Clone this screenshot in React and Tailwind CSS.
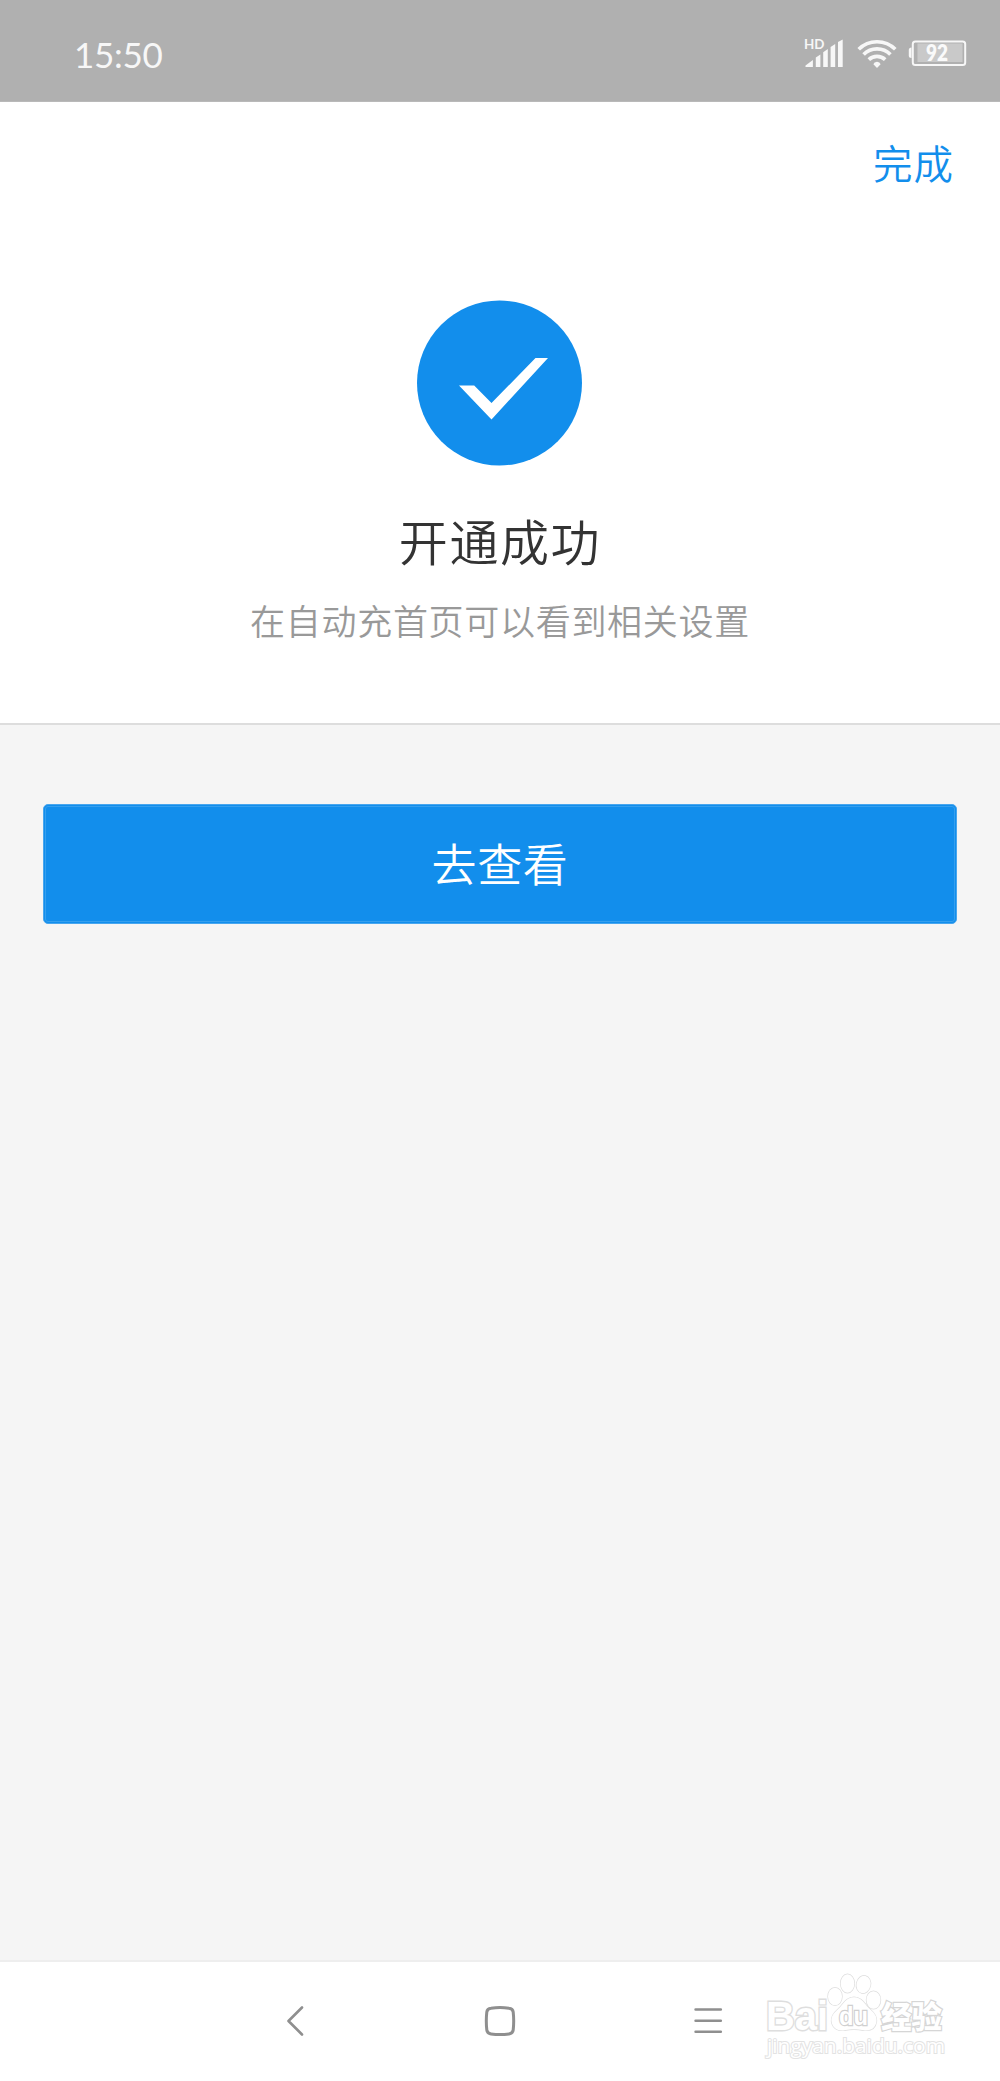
import React from 'react';

const SignalIcon = () => (
  <svg className="mt-[-6px]" width="40" height="36" viewBox="0 -6 40 36" fill="#f7f7f7">
    <text x="0" y="10" fontSize="14" fontWeight="700" fontFamily="Lato, sans-serif" textLength="20.5" lengthAdjust="spacingAndGlyphs">HD</text>
    <path d="M1.500 28V26.500L8.900 21v7z" />
    <path d="M11.800 28V18.600L16.400 15.400V28z" />
    <path d="M19.200 28V13.200L23.800 10V28z" />
    <path d="M26.600 28V8L31.200 5V28z" />
    <path d="M34 28V3L38.700 .6V28z" />
  </svg>
);

const WifiIcon = () => (
  <svg width="40" height="30" viewBox="0 0 40 30" fill="none" stroke="#f7f7f7" strokeWidth="3.700">
    <path d="M1.700 10.300a26 26 0 0 1 36.600 0" />
    <path d="M6.600 15.500a19 19 0 0 1 26.800 0" />
    <path d="M11.800 20.600a12 12 0 0 1 16.400 0" />
    <path d="M16.400 25.300a3.700 3.300 0 0 1 7.200 0L20 29z" fill="#f7f7f7" stroke="none" />
  </svg>
);

const BatteryIcon = () => (
  <svg width="60" height="28" viewBox="0 0 60 28">
    <path d="M3.500 8.500Q.8 8.500 .8 11v5.500q0 2.500 2.700 2.500z" fill="#f7f7f7" />
    <rect x="9.500" y="4.500" width="45" height="18.500" fill="#c9c9c9" />
    <rect x="4.800" y="2.500" width="52.400" height="23.500" rx="2.500" fill="none" stroke="#f7f7f7" strokeWidth="2" />
    <text x="18" y="22" fontSize="22.500" fontWeight="800" fill="#fafafa" fontFamily="Lato, sans-serif" textLength="22" lengthAdjust="spacingAndGlyphs">92</text>
  </svg>
);

const StatusBar = () => (
  <header className="flex h-[102px] items-start border-b border-[#b9b9b9] bg-[#b0b0b0] pl-[74px] pr-[32px] pt-[39px]">
    <span className="mt-[-2px] flex-1 font-['Lato',sans-serif] text-[35px] font-normal leading-[35px] tracking-[-0.3px] text-[#f7f7f7]">15:50</span>
    <div className="flex items-start">
      <SignalIcon />
      <div className="ml-[13px] mr-[11px]">
        <WifiIcon />
      </div>
      <BatteryIcon />
    </div>
  </header>
);

// Outlined logo stamped over the bottom corner
const Watermark = () => (
  <svg
    className="absolute right-[50px] top-[10px]"
    width="190"
    height="100"
    viewBox="0 0 190 100"
    fill="#fff"
    stroke="#dedede"
    strokeWidth="1.400"
    paintOrder="stroke"
  >
    <text x="6" y="57.500" fontSize="41" fontWeight="700" strokeWidth="2.800" fontFamily="'Liberation Sans', sans-serif" textLength="62" lengthAdjust="spacingAndGlyphs">Bai</text>
    <ellipse cx="75" cy="24.500" rx="7" ry="8.800" />
    <ellipse cx="87.500" cy="11.500" rx="6.800" ry="9.200" />
    <ellipse cx="103.500" cy="12.500" rx="7" ry="8.800" transform="rotate(12 103.500 12.500)" />
    <ellipse cx="113.500" cy="28" rx="7" ry="8.800" />
    <path d="M94 25.200c-8 0-11 7.500-16 12-4.500 4-7 7.500-6.500 12 1 7.500 7 10 13 9 7-1.200 12-1.200 19 0 7 1 12-2 13-9 .5-5-2-8-6.500-12-5-4.500-8-12-16-12z" />
    <text x="79" y="53" fontSize="25" fontWeight="700" strokeWidth="2.400" stroke="#d0d0d0" fontFamily="'Liberation Sans', sans-serif" textLength="29" lengthAdjust="spacingAndGlyphs">du</text>
    <text x="121" y="55.500" fontSize="31" fontWeight="900" strokeWidth="2.400" stroke="#d6d6d6" fontFamily="'Noto Sans CJK SC', sans-serif" textLength="61" lengthAdjust="spacingAndGlyphs">经验</text>
    <text x="7" y="81" fontSize="20" fontWeight="400" strokeWidth="2" stroke="#e3e3e3" fontFamily="'Open Sans', sans-serif" textLength="178" lengthAdjust="spacingAndGlyphs">jingyan.baidu.com</text>
  </svg>
);

const NavBar = () => (
  <nav className="relative h-[121px] border-t-2 border-[#eeeeee] bg-white pt-[43px]">
    <div className="flex pl-[285px]">
      <svg width="20" height="32" viewBox="0 0 20 32" fill="none" stroke="#8f8f8f" strokeWidth="2.600" strokeLinecap="round" strokeLinejoin="round">
        <path d="M17 2.500L3.500 16 17 29.500" />
      </svg>
      <svg className="ml-[179px]" width="32" height="32" viewBox="0 0 32 32" fill="none" stroke="#8f8f8f" strokeWidth="3">
        <path d="M7 3.200Q16 1.800 25 3.200Q28.800 3.500 29.200 7Q30.200 16 29.200 25Q28.800 28.500 25 28.900Q16 30.200 7 28.900Q3.200 28.500 2.800 25Q1.800 16 2.800 7Q3.200 3.500 7 3.200z" />
      </svg>
      <svg className="ml-[177px]" width="32" height="32" viewBox="0 0 32 32" stroke="#8f8f8f" strokeWidth="2.600" strokeLinecap="round">
        <path d="M2.600 4.500H27.800M2.600 15.700H27.800M2.600 26.700H27.800" />
      </svg>
    </div>
    <Watermark />
  </nav>
);

const App = () => {
  return (
    <div className="flex h-[2081px] w-[1000px] flex-col bg-[#f5f5f5] font-['Noto_Sans_CJK_SC',sans-serif] font-[350]">
      <StatusBar />
      <section className="flex h-[623px] flex-col items-center border-b-2 border-[#dddddd] bg-white">
        <button className="mr-[46px] mt-[30px] self-end text-[39.5px] leading-[60px] tracking-[1px] text-[#128eec]">完成</button>
        <svg className="mt-[108px]" width="166" height="166" viewBox="0 0 166 166">
          <circle cx="82.500" cy="83" r="82.500" fill="#128eec" />
          <path d="M42 85.500H57.200L74.500 103 118.500 58H131L74.500 119.500z" fill="#fff" />
        </svg>
        <h1 className="mt-[44px] text-[49px] leading-[60px] tracking-[1.6px] text-[#333333]">开通成功</h1>
        <p className="mt-[25px] text-[35px] leading-[50px] tracking-[0.7px] text-[#999999]">在自动充首页可以看到相关设置</p>
      </section>
      <main className="flex-1 px-[43px] pt-[79px]">
        <button className="h-[120px] w-full rounded-[5px] border border-[#48a6ee] bg-[#128eec] p-[1px] text-[45px] leading-[60px] tracking-[0.6px] text-white">
          <span className="flex h-full items-center justify-center rounded-[3px] border border-[#359fee] pb-[3px]">去查看</span>
        </button>
      </main>
      <NavBar />
    </div>
  );
};

export default App;
